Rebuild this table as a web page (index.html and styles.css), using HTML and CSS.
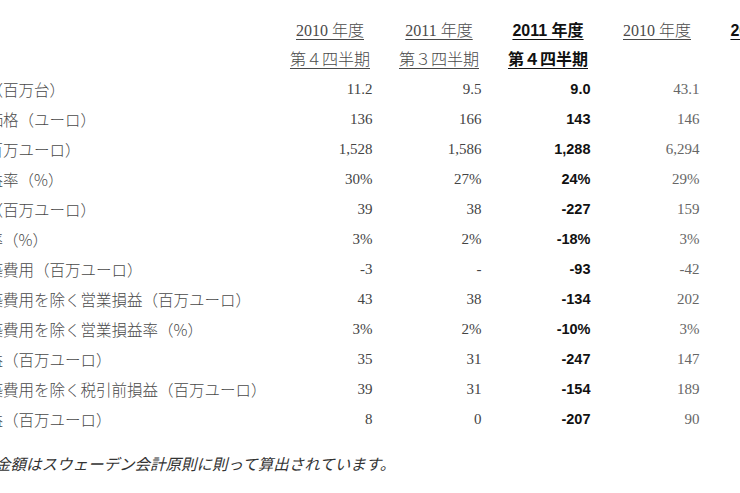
FILE: index.html
```html
<!DOCTYPE html>
<html lang="ja">
<head>
<meta charset="utf-8">
<title>業績概要</title>
<link rel="stylesheet" href="styles.css">
</head>
<body>
<div class="page">
  <table class="fin">
    <colgroup>
      <col class="c-lbl">
      <col class="c-val"><col class="c-val"><col class="c-val"><col class="c-val"><col class="c-val">
    </colgroup>
    <thead>
      <tr class="h1">
        <th class="lbl"></th>
        <th class="hd"><span class="u">2010 年度</span></th>
        <th class="hd"><span class="u">2011 年度</span></th>
        <th class="hd b"><span class="u">2011 年度</span></th>
        <th class="hd"><span class="u">2010 年度</span></th>
        <th class="hd b"><span class="u">2011 年度</span></th>
      </tr>
      <tr class="h2">
        <th class="lbl"></th>
        <th class="hd"><span class="u">第４四半期</span></th>
        <th class="hd"><span class="u">第３四半期</span></th>
        <th class="hd b"><span class="u">第４四半期</span></th>
        <th class="hd"></th>
        <th class="hd b"></th>
      </tr>
    </thead>
    <tbody>
      <tr><td class="lbl">販売台数（百万台）</td><td class="num">11.2</td><td class="num">9.5</td><td class="num b">9.0</td><td class="num">43.1</td><td class="num"></td></tr>
      <tr><td class="lbl">平均販売価格（ユーロ）</td><td class="num">136</td><td class="num">166</td><td class="num b">143</td><td class="num">146</td><td class="num"></td></tr>
      <tr><td class="lbl">売上高（百万ユーロ）</td><td class="num">1,528</td><td class="num">1,586</td><td class="num b">1,288</td><td class="num">6,294</td><td class="num"></td></tr>
      <tr><td class="lbl">売上総利益率（%）</td><td class="num">30%</td><td class="num">27%</td><td class="num b">24%</td><td class="num">29%</td><td class="num"></td></tr>
      <tr><td class="lbl">営業損益（百万ユーロ）</td><td class="num">39</td><td class="num">38</td><td class="num b">-227</td><td class="num">159</td><td class="num"></td></tr>
      <tr><td class="lbl">営業利益率（%）</td><td class="num">3%</td><td class="num">2%</td><td class="num b">-18%</td><td class="num">3%</td><td class="num"></td></tr>
      <tr><td class="lbl">事業再構築費用（百万ユーロ）</td><td class="num">-3</td><td class="num">-</td><td class="num b">-93</td><td class="num">-42</td><td class="num"></td></tr>
      <tr><td class="lbl">事業再構築費用を除く営業損益（百万ユーロ）</td><td class="num">43</td><td class="num">38</td><td class="num b">-134</td><td class="num">202</td><td class="num"></td></tr>
      <tr><td class="lbl">事業再構築費用を除く営業損益率（%）</td><td class="num">3%</td><td class="num">2%</td><td class="num b">-10%</td><td class="num">3%</td><td class="num"></td></tr>
      <tr><td class="lbl">税引前損益（百万ユーロ）</td><td class="num">35</td><td class="num">31</td><td class="num b">-247</td><td class="num">147</td><td class="num"></td></tr>
      <tr><td class="lbl">事業再構築費用を除く税引前損益（百万ユーロ）</td><td class="num">39</td><td class="num">31</td><td class="num b">-154</td><td class="num">189</td><td class="num"></td></tr>
      <tr><td class="lbl">当期純損益（百万ユーロ）</td><td class="num">8</td><td class="num">0</td><td class="num b">-207</td><td class="num">90</td><td class="num"></td></tr>
    </tbody>
  </table>
  <p class="note">上記の金額はスウェーデン会計原則に則って算出されています。</p>
</div>
</body>
</html>
```

FILE: styles.css
```css
html, body {
  margin: 0;
  padding: 0;
  background: #ffffff;
  overflow: hidden;
}

.page {
  margin-left: -74.5px;
  width: 900px;
  padding-top: 16px;
}

.fin {
  border-collapse: collapse;
  table-layout: fixed;
  width: 895px;
}

.c-lbl { width: 350px; }
.c-val { width: 109px; }

.fin th,
.fin td {
  padding: 0;
  height: 30px;
  line-height: 20px;
  vertical-align: middle;
  white-space: nowrap;
}

.fin .h2 th {
  height: 28px;
}

.lbl {
  text-align: left;
  font-family: "Noto Sans CJK JP", sans-serif;
  font-size: 15.5px;
  font-weight: 300;
  color: #4a4a4a;
}

.hd {
  text-align: center;
  font-family: "Liberation Serif", "Noto Sans CJK JP", serif;
  font-size: 16px;
  font-weight: 300;
  color: #4a4a4a;
}

.hd.b {
  font-family: "Liberation Sans", "Noto Sans CJK JP", sans-serif;
  font-weight: 700;
  color: #111111;
}

.u {
  text-decoration: underline;
  text-decoration-thickness: 1px;
  text-underline-offset: 3px;
}

.num {
  text-align: right;
  padding-right: 12px !important;
  font-family: "Liberation Serif", serif;
  font-size: 15px;
  color: #444444;
}

.num.b {
  font-family: "Liberation Sans", sans-serif;
  font-size: 14.5px;
  font-weight: 700;
  color: #111111;
}

.fin tbody td:nth-child(5) {
  color: #666666;
}

.note {
  margin: 19px 0 0 23px;
  font-family: "Noto Sans CJK JP", sans-serif;
  font-size: 15.5px;
  font-style: italic;
  line-height: 20px;
  color: #333333;
  white-space: nowrap;
}
```
